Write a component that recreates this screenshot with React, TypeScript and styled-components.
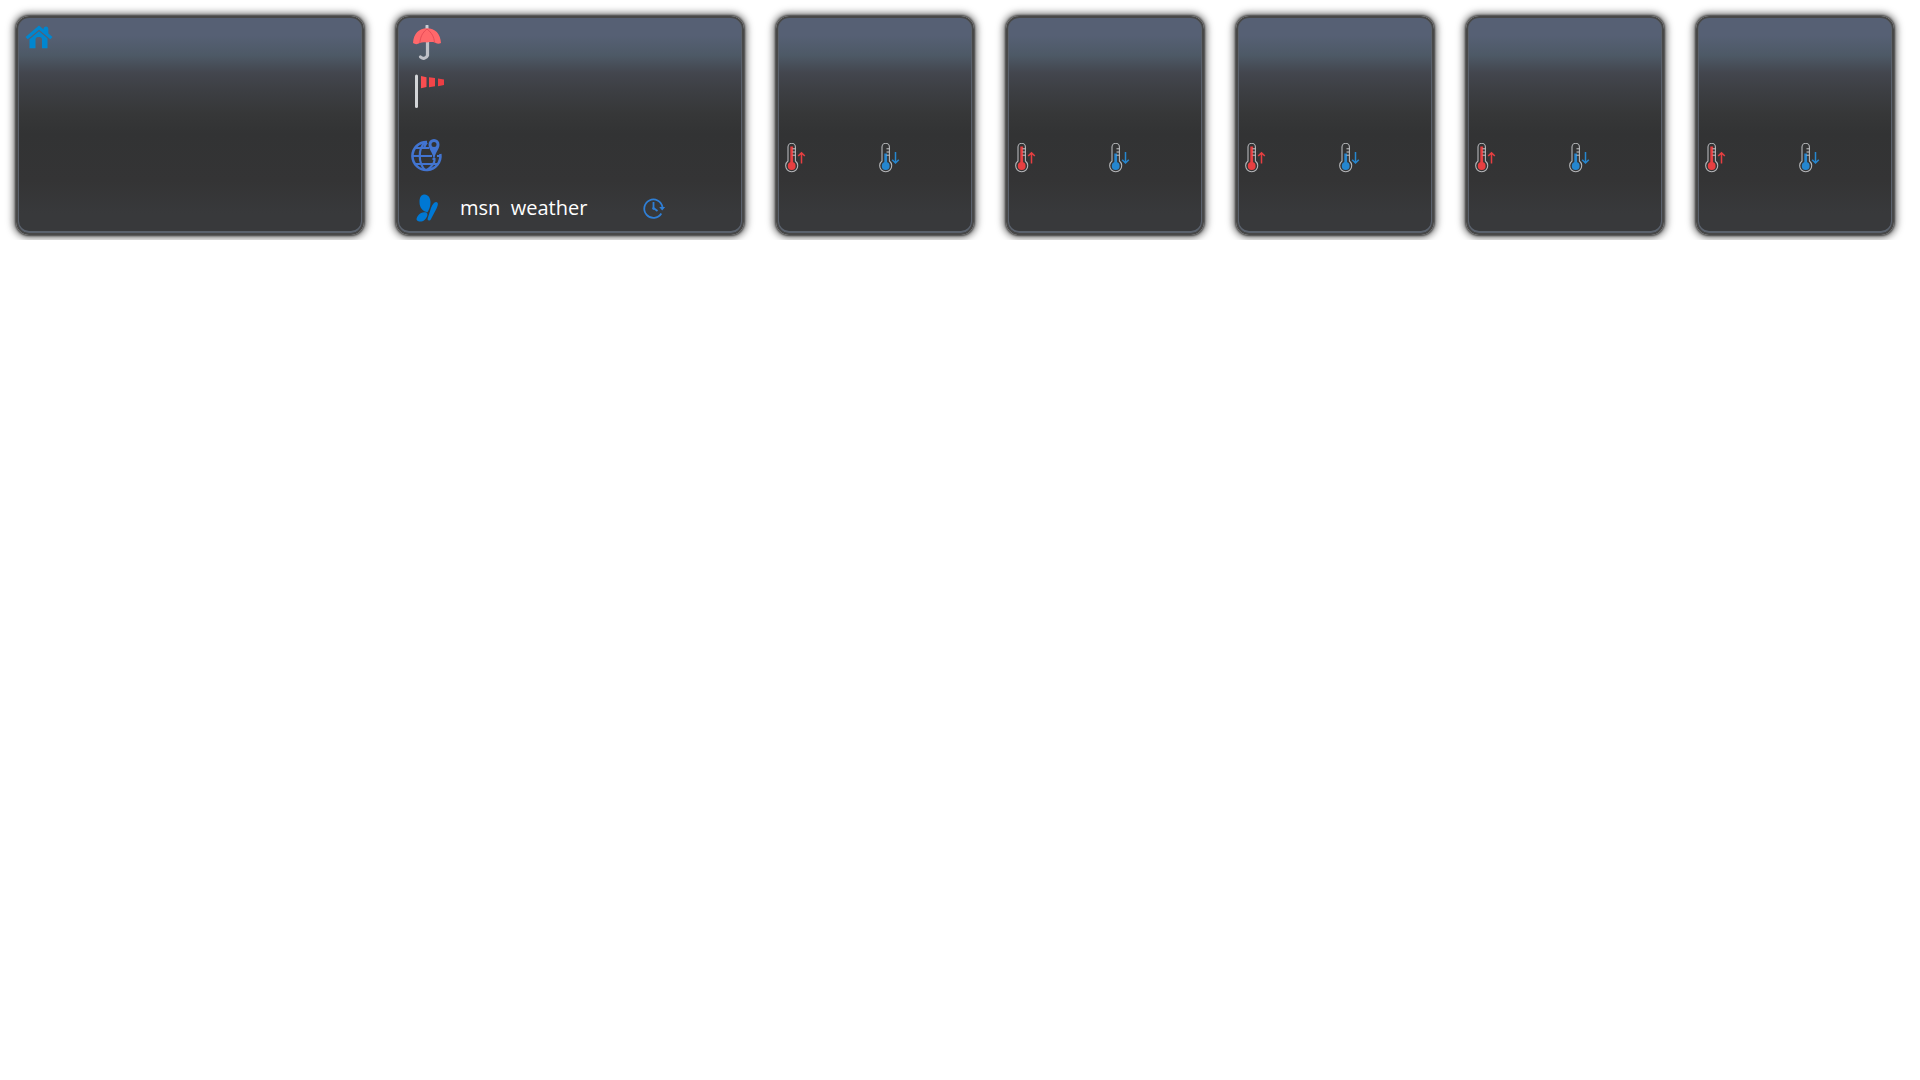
import React from "react";
import styled, { createGlobalStyle } from "styled-components";

const GlobalStyle = createGlobalStyle`
  * { box-sizing: border-box; }
  body {
    margin: 0;
    background: #ffffff;
    font-family: "Open Sans", "Noto Sans", sans-serif;
  }
`;

const Dashboard = styled.main`
  display: grid;
  grid-template-columns: repeat(2, minmax(0, 348fr)) repeat(5, minmax(0, 198fr));
  gap: 32px;
  padding: 16px 26px 5px 16px;
  overflow: hidden;
`;

const Card = styled.section`
  display: flex;
  flex-direction: column;
  min-height: 219px;
  border: 2px solid #484848;
  border-radius: 13px;
  background: linear-gradient(
    to bottom,
    #566074 0%,
    #566074 9%,
    #4d5966 18%,
    #43464e 26%,
    #3c3e42 35%,
    #363738 45%,
    #323334 54%,
    #343435 75%,
    #38393b 90%,
    #38393b 100%
  );
  background-origin: border-box;
  box-shadow:
    inset 0 -1px 0 1px #5a616c,
    0 0 2px 1px rgba(40, 40, 40, 0.75),
    0 0 7px 3px rgba(40, 40, 40, 0.6);
`;

const HomeCard = styled(Card)`
  padding: 7px;
`;

const CurrentCard = styled(Card)`
  padding: 7px 12px;
`;

const ForecastCard = styled(Card)`
  display: grid;
  grid-template-columns: 1fr 1fr;
  align-items: start;
  padding: 125px 0 0 7px;
`;

const Row = styled.div<{ $height: number }>`
  display: flex;
  align-items: center;
  height: ${(p) => p.$height}px;
`;

const Spacer = styled.div`
  flex: 1;
`;

const Source = styled.span`
  width: 200px;
  padding-left: 18px;
  color: #ffffff;
  font-size: 20px;
  line-height: 28px;
  white-space: pre;
`;

const Icon = styled.svg`
  display: block;
  flex: none;
`;

const HomeIcon = () => (
  <Icon width="28" height="24" viewBox="0 0 28 24" fill="#0086cf">
    <path d="M0.5 12 14 0.5 18.5 4.4V4C18.500 2.500 19.500 1.500 21 1.500S23.300 2.500 23.300 4V8.400L27.500 12 25.300 14.200 14 4.700 2.700 14.200Z" />
    <path d="M4.500 14.300 14 6.300 22.500 13.500V23.300H17V14.500C17 13 16 12 14.800 12H13C11.500 12 10.500 13 10.500 14.500V23.300H4.500Z" />
  </Icon>
);

const UmbrellaIcon = () => (
  <Icon width="32" height="36" viewBox="0 0 32 36">
    <path d="M17 1V5" stroke="#c9cbd2" strokeWidth="3" strokeLinecap="round" />
    <path d="M17.500 17V30.500a4.200 4.200 0 0 1-7 1.500" fill="none" stroke="#bfc1c8" strokeWidth="3.200" strokeLinecap="round" />
    <path d="M3 18C3.500 8.500 9 3.200 17 3.200S30.500 8.500 31 18C29 19 26.500 19 24.500 17.300 22 17 19.500 17 17 17.600 14.500 17 12 17 9.800 18 7.500 19.500 5 19.500 3 18Z" fill="#ff686b" />
    <path d="M17 4C12 8 10.500 12 9.800 18M17 4c5 4 7 8 7.500 13.500" fill="none" stroke="#e74c57" strokeWidth="1" />
  </Icon>
);

const WindsockIcon = () => (
  <Icon width="34" height="36" viewBox="0 0 34 36">
    <path d="M6.500 3V33.500" stroke="#d3d5d8" strokeWidth="3" strokeLinecap="round" />
    <path d="M11 3 16.500 4.200V14L11 15.300Z" fill="#f94d50" />
    <path d="M19 4.300 25 5.100V13.200L19 14.300Z" fill="#f34549" />
    <path d="M28 5.600 34 6.500V12L28 13.200Z" fill="#ed3e44" />
  </Icon>
);

const GlobeIcon = () => (
  <Icon width="34" height="34" viewBox="0 0 34 34" fill="none" stroke="#4274d0" strokeWidth="2.200">
    <path d="M17 4A14 14 0 1 0 30.300 16" strokeWidth="2.600" />
    <path d="M15 4C8 11 8 25 15 32M17 4.500C15.500 6 14.500 8 14 10M17 32C24 27 24.500 24 24.500 22M5.500 10H19M2 18H22M27 18H31M5 26H28" />
    <path d="M24 20V22" strokeWidth="3" />
    <path fill="#4274d0" stroke="none" fillRule="evenodd" d="M24 1a5.500 5.500 0 0 1 5.500 5.500C29.500 11 25.500 14 24.500 20h-1C22.500 14 18.500 11 18.500 6.500A5.500 5.500 0 0 1 24 1ZM24 4a2.500 2.500 0 1 0 0 5 2.500 2.500 0 0 0 0-5Z" />
  </Icon>
);

const ButterflyIcon = () => (
  <Icon width="32" height="28" viewBox="0 0 32 28" fill="#0078d4">
    <path d="M14 0.500C18 0 20.500 4 20.500 8 20.500 12.500 19 16 17.500 18.300 13 17.500 9.500 14 9.500 8 9.500 3.500 11 0.800 14 0.500Z" />
    <path d="M16.500 18.500C18.500 20 17 24 14.500 26 12 28.200 7.500 28 6.500 25.500 6.800 22 10.500 17 16.500 18.500Z" />
    <path d="M26 8C29 8 28 12 26 15.500L21 25C20 27.300 16.800 27 17.800 24L21 14C22.500 10.500 24 8 26 8Z" />
  </Icon>
);

const ClockIcon = () => (
  <Icon width="24" height="24" viewBox="0 0 24 24" fill="none" stroke="#2f7fd6" strokeWidth="1.800">
    <path d="M20.500 11A9.200 9.200 0 1 0 19.300 17.500" />
    <path d="M11.500 6V12L15.500 15" />
    <circle cx="11.500" cy="12.500" r="1" strokeWidth="1" />
    <path d="M17.200 11H23.200L20.200 14.500Z" fill="#2f7fd6" stroke="none" />
  </Icon>
);

const Thermometer = ({ trend }: { trend: "up" | "down" }) => {
  const up = trend === "up";
  const color = up ? "#e73f41" : "#2586cf";
  return (
    <Icon width="22" height="30" viewBox="0 0 22 30" fill="none">
      <path d="M3 18V4a3.700 3.700 0 0 1 7.400 0V18a6 6 0 1 1-7.400 0Z" stroke="#b5b7ba" strokeWidth="1.100" />
      <path d={up ? "M6.700 3.500V23" : "M6.700 10.500V23"} stroke={color} strokeWidth="2.800" />
      <circle cx="6.700" cy="23" r="3.900" fill={color} />
      <path d="M7.500 5.800H10.500M7.500 9H10.500M7.500 12.200H10.500" stroke="#c7c8ca" strokeWidth="1" />
      <path d={up ? "M16.500 20.500V10M13.200 13 16.500 9.700 19.800 13" : "M16.500 9V20M13.200 16.700 16.500 20 19.800 16.700"} stroke={color} strokeWidth="1.500" />
    </Icon>
  );
};

const forecastDays = [1, 2, 3, 4, 5];

export default function App() {
  return (
    <>
      <GlobalStyle />
      <Dashboard>
        <HomeCard>
          <HomeIcon />
        </HomeCard>
        <CurrentCard>
          <Row $height={36}>
            <UmbrellaIcon />
          </Row>
          <Row $height={60}>
            <WindsockIcon />
          </Row>
          <Row $height={68}>
            <GlobeIcon />
          </Row>
          <Spacer />
          <Row $height={36}>
            <ButterflyIcon />
            <Source>{"msn  weather"}</Source>
            <ClockIcon />
          </Row>
        </CurrentCard>
        {forecastDays.map((day) => (
          <ForecastCard key={day}>
            <Thermometer trend="up" />
            <Thermometer trend="down" />
          </ForecastCard>
        ))}
      </Dashboard>
    </>
  );
}
